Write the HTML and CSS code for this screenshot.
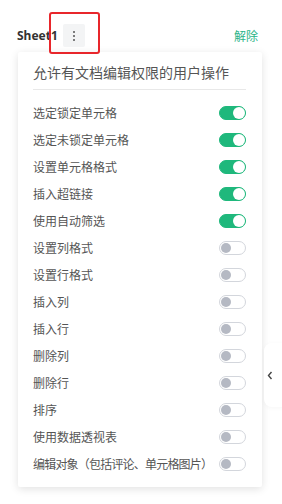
FILE: index.html
```html
<!DOCTYPE html>
<html lang="zh">
<head>
<meta charset="utf-8">
<link rel="stylesheet" href="styles.css">
</head>
<body>
<div class="panel">
  <div class="header">
    <span class="sheet-name">Sheet1</span>
    <span class="more-btn"><i></i><i></i><i></i></span>
    <span class="unlock">解除</span>
  </div>
  <div class="highlight"></div>
  <div class="card">
    <div class="card-title">允许有文档编辑权限的用户操作</div>
    <ul class="perm-list">
      <li class="perm"><span class="perm-label">选定锁定单元格</span><span class="toggle on"></span></li>
      <li class="perm"><span class="perm-label">选定未锁定单元格</span><span class="toggle on"></span></li>
      <li class="perm"><span class="perm-label">设置单元格格式</span><span class="toggle on"></span></li>
      <li class="perm"><span class="perm-label">插入超链接</span><span class="toggle on"></span></li>
      <li class="perm"><span class="perm-label">使用自动筛选</span><span class="toggle on"></span></li>
      <li class="perm"><span class="perm-label">设置列格式</span><span class="toggle"></span></li>
      <li class="perm"><span class="perm-label">设置行格式</span><span class="toggle"></span></li>
      <li class="perm"><span class="perm-label">插入列</span><span class="toggle"></span></li>
      <li class="perm"><span class="perm-label">插入行</span><span class="toggle"></span></li>
      <li class="perm"><span class="perm-label">删除列</span><span class="toggle"></span></li>
      <li class="perm"><span class="perm-label">删除行</span><span class="toggle"></span></li>
      <li class="perm"><span class="perm-label">排序</span><span class="toggle"></span></li>
      <li class="perm"><span class="perm-label">使用数据透视表</span><span class="toggle"></span></li>
      <li class="perm"><span class="perm-label perm-label--long">编辑对象（包括评论、单元格图片）</span><span class="toggle"></span></li>
    </ul>
  </div>
  <div class="collapse-tab">
    <svg width="6" height="9" viewBox="0 0 6 9"><path d="M4.5 1 L1.5 4.5 L4.5 8" fill="none" stroke="#444" stroke-width="1.4"/></svg>
  </div>
</div>
</body>
</html>
```
FILE: styles.css
```css
html, body {
  margin: 0;
  padding: 0;
  background: #fff;
}
body {
  font-family: "Noto Sans", "Noto Sans CJK SC", sans-serif;
  width: 282px;
  height: 504px;
  overflow: hidden;
}
.panel {
  position: relative;
  height: 504px;
}
.header {
  display: flex;
  align-items: center;
  padding: 24px 24px 5px 17px;
  height: 23px;
}
.sheet-name {
  font-size: 12px;
  font-weight: 700;
  color: #333;
  font-family: "Noto Sans", sans-serif;
}
.more-btn {
  margin-left: 5px;
  width: 22px;
  height: 23px;
  border-radius: 2px;
  background: #f3f4f5;
  display: flex;
  flex-direction: column;
  align-items: center;
  justify-content: center;
  gap: 2px;
}
.more-btn i {
  display: block;
  width: 2px;
  height: 2px;
  border-radius: 1px;
  background: #555;
}
.unlock {
  margin-left: auto;
  font-size: 12px;
  color: #2bb387;
  font-family: "Noto Sans CJK SC", sans-serif;
}
.highlight {
  position: absolute;
  left: 49px;
  top: 12px;
  width: 47px;
  height: 38px;
  border: 2px solid #e8262b;
  border-radius: 3px;
  z-index: 2;
}
.card {
  margin-left: 18px;
  width: 244px;
  box-sizing: border-box;
  padding: 0 16px 10px 15px;
  background: #fff;
  box-shadow: 0 2px 8px rgba(0, 0, 0, 0.12);
  border-radius: 2px;
}
.card-title {
  font-family: "Noto Sans CJK SC", sans-serif;
  font-size: 14px;
  line-height: 20px;
  color: #555;
  padding: 10px 0 7px;
  border-bottom: 1px solid #e8e8e8;
}
.perm-list {
  list-style: none;
  margin: 0;
  padding: 9px 0 0;
}
.perm {
  display: flex;
  align-items: center;
  justify-content: space-between;
  height: 27px;
}
.perm-label {
  font-family: "Noto Sans CJK SC", sans-serif;
  font-size: 12px;
  color: #555;
  white-space: nowrap;
}
.perm-label--long {
  letter-spacing: -0.8px;
}
.toggle {
  position: relative;
  flex: none;
  width: 27px;
  height: 14px;
  box-sizing: border-box;
  border-radius: 7px;
  border: 1px solid #d3d6dc;
  background: #fff;
}
.toggle::after {
  content: "";
  position: absolute;
  top: 1px;
  left: 1px;
  width: 10px;
  height: 10px;
  border-radius: 50%;
  background: #b5b9c3;
}
.toggle.on {
  background: #1fb87c;
  border-color: #1fb87c;
}
.toggle.on::after {
  left: auto;
  right: 0;
  top: 0;
  width: 12px;
  height: 12px;
  background: #fff;
}
.collapse-tab {
  position: absolute;
  left: 264px;
  top: 343px;
  width: 24px;
  height: 64px;
  border-radius: 8px;
  background: #fff;
  box-shadow: 0 1px 5px rgba(0, 0, 0, 0.04);
  display: flex;
  align-items: center;
  padding-left: 3px;
  box-sizing: border-box;
}
```
